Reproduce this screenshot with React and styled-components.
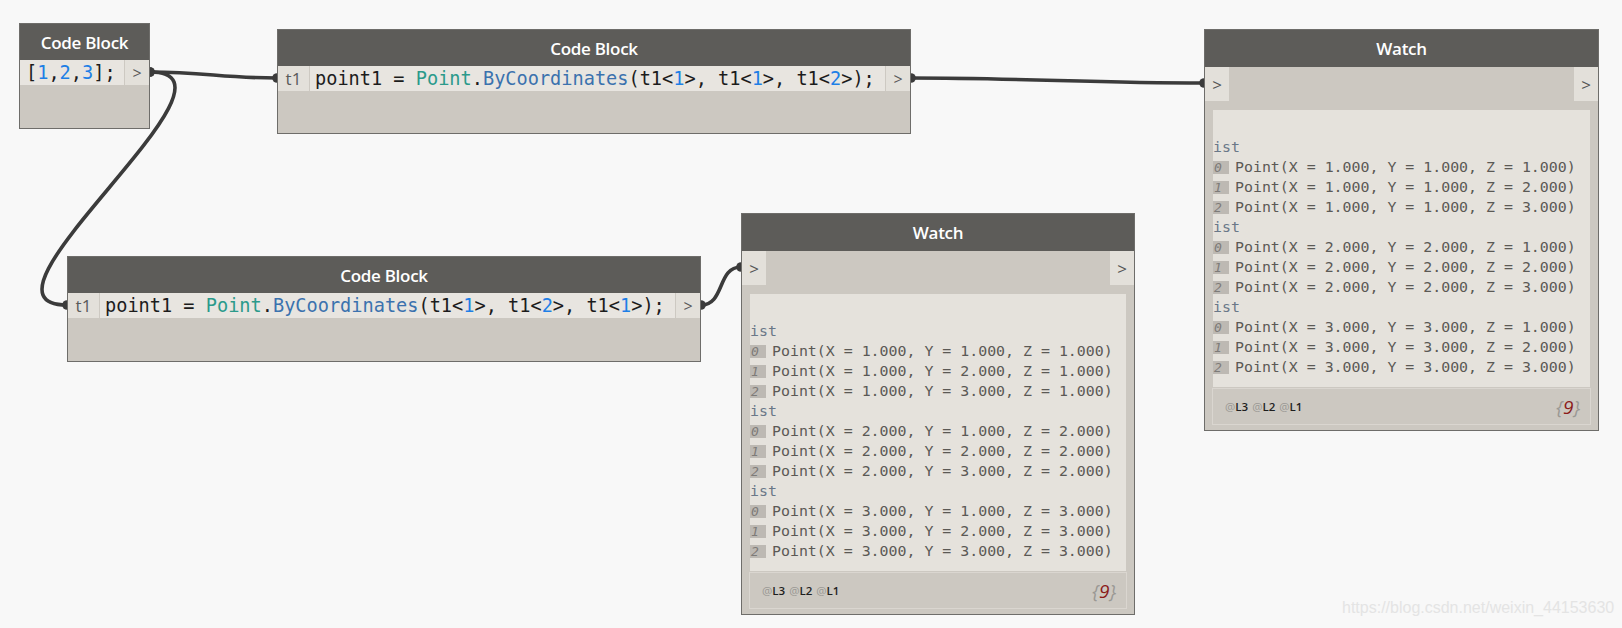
import React from "react";
import styled, { createGlobalStyle } from "styled-components";

const GlobalStyle = createGlobalStyle`
  html, body { margin: 0; padding: 0; background: #f8f8f8; }
  #root { width: 1622px; height: 628px; }
`;

const Canvas = styled.div`
  position: relative;
  width: 1622px;
  height: 628px;
  overflow: hidden;
  background: #f8f8f8;
  font-family: "Open Sans", "DejaVu Sans", sans-serif;
`;

const WireLayer = styled.svg`
  position: absolute;
  left: 0;
  top: 0;
  width: 1622px;
  height: 628px;
`;

const Node = styled.div`
  position: absolute;
  left: ${(p) => p.$x}px;
  top: ${(p) => p.$y}px;
  width: ${(p) => p.$w}px;
  height: ${(p) => p.$h}px;
  box-sizing: border-box;
  border: 1px solid #6e6d6a;
  background: #ccc8c1;
  display: flex;
  flex-direction: column;
`;

const Header = styled.div`
  flex: 0 0 ${(p) => p.$h || 36}px;
  background: #5d5c59;
  color: #ffffff;
  display: flex;
  align-items: center;
  justify-content: center;
  font-family: "Open Sans", sans-serif;
  font-weight: 600;
  font-size: 17px;
  letter-spacing: -0.3px;
`;

const CodeRow = styled.div`
  flex: 0 0 25px;
  display: flex;
  align-items: stretch;
  background: #e8e5e0;
`;

const PortLabel = styled.div`
  flex: 0 0 ${(p) => p.$w}px;
  box-sizing: border-box;
  display: flex;
  align-items: center;
  justify-content: center;
  background: #e3e0da;
  color: #5a5a5a;
  font-family: "Open Sans", sans-serif;
  font-size: ${(p) => p.$fs || 17}px;
  border-${(p) => p.$side}: 1px solid #cdc9c2;
`;

const Code = styled.div`
  flex: 1;
  padding-left: ${(p) => p.$pad || 5}px;
  font-family: "DejaVu Sans Mono", monospace;
  font-size: 18.6px;
  line-height: 25px;
  color: #1c1c1c;
  white-space: pre;
  overflow: hidden;
`;

const Tok = styled.span`
  color: ${(p) =>
    p.$k === "num" ? "#1e7fe6" : p.$k === "cls" ? "#2b9a8b" : p.$k === "fn" ? "#3b72ae" : "#1c1c1c"};
`;

const PortRow = styled.div`
  flex: 0 0 34px;
  display: flex;
  justify-content: space-between;
`;

const WatchPort = styled.div`
  width: 24px;
  display: flex;
  align-items: center;
  justify-content: center;
  background: #e3e0da;
  color: #555;
  font-family: "Open Sans", sans-serif;
  font-size: 17px;
`;

const Content = styled.div`
  flex: 0 0 277px;
  margin: 9px 8px 0 8px;
  box-sizing: border-box;
  padding-top: 27px;
  background: #e5e2dc;
  overflow: hidden;
`;

const Line = styled.div`
  height: 20px;
  display: flex;
  align-items: center;
  font-family: "DejaVu Sans Mono", monospace;
  font-size: 14.9px;
  color: ${(p) => (p.$list ? "#6a7888" : "#5b5955")};
  white-space: pre;
`;

const Index = styled.span`
  width: 16px;
  height: 13px;
  margin-right: 6px;
  box-sizing: border-box;
  padding-left: 1px;
  background: #bdb9b3;
  color: #7d7b78;
  font-style: italic;
  font-size: 13px;
  line-height: 13px;
`;

const Footer = styled.div`
  flex: 0 0 37px;
  margin: 1px 7px 0 7px;
  box-sizing: border-box;
  border: 1px solid #dad6d0;
  display: flex;
  align-items: center;
  justify-content: space-between;
  padding: 0 10px 0 12px;
`;

const Levels = styled.div`
  display: flex;
  gap: 4px;
  font-family: "Open Sans", sans-serif;
  font-size: 11.5px;
  font-weight: 600;
  color: #1e1e1e;
`;

const At = styled.span`
  color: #9a9894;
  font-weight: 400;
`;

const Count = styled.div`
  font-family: "Open Sans", sans-serif;
  font-style: italic;
  font-size: 19px;
  color: #9a9894;
`;

const CountNum = styled.span`
  color: #8b1a1a;
`;

const Watermark = styled.div`
  position: absolute;
  left: 1342px;
  top: 599px;
  font-family: "Liberation Sans", Arial, sans-serif;
  font-size: 16px;
  color: #e4e4e4;
  white-space: nowrap;
`;

const WIRE = "#3b3b3b";

function Wire({ x0, y0, x1, y1, d }) {
  return (
    <g>
      <path
        d={`M ${x0} ${y0} C ${x0 + d} ${y0}, ${x1 - d} ${y1}, ${x1} ${y1}`}
        fill="none"
        stroke={WIRE}
        strokeWidth="3.6"
      />
      <circle cx={x0} cy={y0} r="4.8" fill={WIRE} />
      <circle cx={x1} cy={y1} r="4.8" fill={WIRE} />
    </g>
  );
}

const pointCode = (a, b, c) => (
  <>
    <Tok>point1 = </Tok>
    <Tok $k="cls">Point</Tok>
    <Tok>.</Tok>
    <Tok $k="fn">ByCoordinates</Tok>
    <Tok>(t1&lt;</Tok>
    <Tok $k="num">{a}</Tok>
    <Tok>&gt;, t1&lt;</Tok>
    <Tok $k="num">{b}</Tok>
    <Tok>&gt;, t1&lt;</Tok>
    <Tok $k="num">{c}</Tok>
    <Tok>&gt;);</Tok>
  </>
);

function CodeBlock({ x, y, w, h, input, children, pad }) {
  return (
    <Node $x={x} $y={y} $w={w} $h={h}>
      <Header>Code Block</Header>
      <CodeRow>
        {input && (
          <PortLabel $w={32} $side="right" $fs={17}>
            t1
          </PortLabel>
        )}
        <Code $pad={pad}>{children}</Code>
        <PortLabel $w={25} $side="left" $fs={16}>
          &gt;
        </PortLabel>
      </CodeRow>
    </Node>
  );
}

function fmt(n) {
  return n.toFixed(3);
}

function Watch({ x, y, w, rows }) {
  const lines = [];
  rows.forEach((grp, gi) => {
    lines.push(
      <Line key={`l${gi}`} $list>
        ist
      </Line>
    );
    grp.forEach((p, i) => {
      lines.push(
        <Line key={`p${gi}-${i}`}>
          <Index>{i}</Index>
          {`Point(X = ${fmt(p[0])}, Y = ${fmt(p[1])}, Z = ${fmt(p[2])})`}
        </Line>
      );
    });
  });
  return (
    <Node $x={x} $y={y} $w={w} $h={402}>
      <Header $h={37}>Watch</Header>
      <PortRow>
        <WatchPort>&gt;</WatchPort>
        <WatchPort>&gt;</WatchPort>
      </PortRow>
      <Content>{lines}</Content>
      <Footer>
        <Levels>
          <span>
            <At>@</At>L3
          </span>
          <span>
            <At>@</At>L2
          </span>
          <span>
            <At>@</At>L1
          </span>
        </Levels>
        <Count>
          {"{"}
          <CountNum>9</CountNum>
          {"}"}
        </Count>
      </Footer>
    </Node>
  );
}

const rowsA = [1, 2, 3].map((a) => [1, 2, 3].map((b) => [a, a, b]));
const rowsB = [1, 2, 3].map((a) => [1, 2, 3].map((b) => [a, b, a]));

export default function App() {
  return (
    <>
      <GlobalStyle />
      <Canvas>
        <WireLayer viewBox="0 0 1622 628">
          <Wire x0={150} y0={72} x1={277} y1={78} d={55} />
          <Wire x0={150} y0={72} x1={67} y1={305} d={112} />
          <Wire x0={911} y0={78} x1={1204} y1={83} d={110} />
          <Wire x0={701} y0={305} x1={741} y1={267} d={24} />
        </WireLayer>

        <CodeBlock x={19} y={23} w={131} h={106} pad={6}>
          <Tok>[</Tok>
          <Tok $k="num">1</Tok>
          <Tok>,</Tok>
          <Tok $k="num">2</Tok>
          <Tok>,</Tok>
          <Tok $k="num">3</Tok>
          <Tok>];</Tok>
        </CodeBlock>

        <CodeBlock x={277} y={29} w={634} h={105} input>
          {pointCode(1, 1, 2)}
        </CodeBlock>

        <CodeBlock x={67} y={256} w={634} h={106} input>
          {pointCode(1, 2, 1)}
        </CodeBlock>

        <Watch x={741} y={213} w={394} rows={rowsB} />
        <Watch x={1204} y={29} w={395} rows={rowsA} />

        <Watermark>https://blog.csdn.net/weixin_44153630</Watermark>
      </Canvas>
    </>
  );
}
